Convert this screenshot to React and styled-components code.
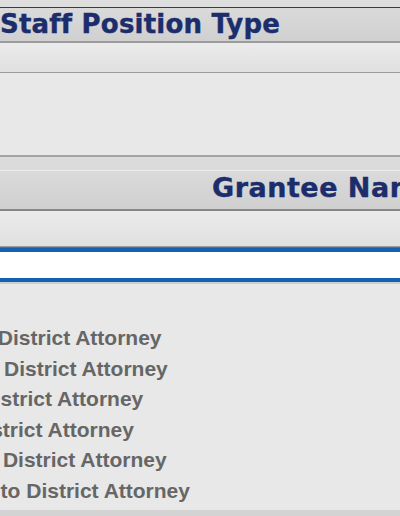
import React from "react";
import styled, { createGlobalStyle } from "styled-components";

const GlobalStyle = createGlobalStyle`
  html, body {
    margin: 0;
    padding: 0;
    background: #e8e8e8;
  }
`;

const Page = styled.div`
  width: 400px;
  height: 516px;
  overflow: hidden;
  display: flex;
  flex-direction: column;
  background: #e8e8e8;
`;

const TopStrip = styled.div`
  height: 7px;
  background: #dedede;
  border-bottom: 1px solid #3c3c3c;
`;

const HeaderBar = styled.div`
  height: ${({ $height }) => $height}px;
  padding-left: ${({ $indent }) => $indent || 0}px;
  background: linear-gradient(#dadada, #d0d0d0);
  border-bottom: 2px solid ${({ $line }) => $line || "#9b9b9b"};
  color: #1b2d6b;
  font-family: "DejaVu Sans", Verdana, sans-serif;
  font-weight: bold;
  font-size: ${({ $size }) => $size}px;
  line-height: ${({ $lh }) => $lh}px;
  letter-spacing: ${({ $spacing }) => $spacing || 0}px;
  -webkit-text-stroke: 0.4px #1b2d6b;
  white-space: nowrap;
  overflow: hidden;
  box-sizing: border-box;
`;

const FilterRow = styled.div`
  height: ${({ $height }) => $height}px;
  background: linear-gradient(#ebebeb, #e0e0e0);
  border-bottom: 1px solid #9c9c9c;
`;

const Body = styled.div`
  height: 82px;
  background: #e8e8e8;
  border-bottom: 2px solid #a4a4a4;
`;

const Spacer = styled.div`
  height: 13px;
  background: #dbdbdb;
  border-bottom: 1px solid #ededed;
`;

const SearchBox = styled.div`
  border-top: 1px solid #6a6a6a;
  border-bottom: 2px solid #cfcfcf;
`;

const SearchInput = styled.input`
  display: block;
  width: 100%;
  height: 34px;
  box-sizing: border-box;
  margin: 0;
  padding: 0 6px;
  background: #ffffff;
  border: none;
  border-top: 4px solid #1660b4;
  border-bottom: 4px solid #1660b4;
  outline: none;
  font-family: "Liberation Sans", Arial, sans-serif;
  font-size: 18px;
`;

const List = styled.ul`
  list-style: none;
  margin: 0 0 0 -101px;
  padding: 39px 0 0;
  flex: 1;
`;

const Item = styled.li`
  font-family: "Liberation Sans", Arial, sans-serif;
  font-weight: bold;
  font-size: 21px;
  line-height: 30.6px;
  color: #666666;
  white-space: nowrap;
`;

const BottomStrip = styled.div`
  height: 6px;
  background: #d3d3d3;
`;

const positions = [
  "Full-Time District Attorney",
  "Associate District Attorney",
  "Elected District Attorney",
  "Acting District Attorney",
  "Executive District Attorney",
  "Secretary to District Attorney",
];

const App = () => {
  return (
    <Page>
      <GlobalStyle />
      <TopStrip />
      <HeaderBar $height={35} $size={26} $lh={32} $spacing={0.2}>
        Staff Position Type
      </HeaderBar>
      <FilterRow $height={29} />
      <Body />
      <Spacer />
      <HeaderBar $height={40} $size={27} $lh={34} $indent={212} $spacing={0.5} $line="#868686">
        Grantee Name
      </HeaderBar>
      <FilterRow $height={35} />
      <SearchBox>
        <SearchInput type="text" aria-label="Grantee Name filter" />
      </SearchBox>
      <List>
        {positions.map((name) => (
          <Item key={name}>{name}</Item>
        ))}
      </List>
      <BottomStrip />
    </Page>
  );
};

export default App;
